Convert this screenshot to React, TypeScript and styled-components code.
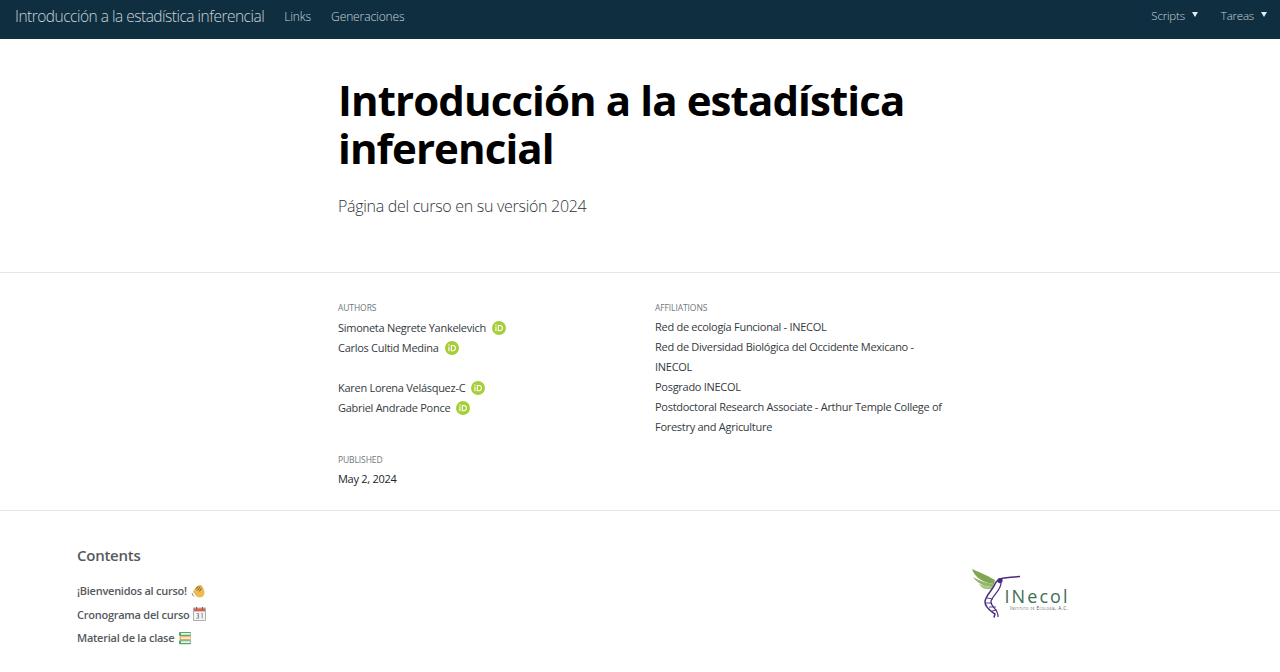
import styled, { createGlobalStyle } from "styled-components";

const GlobalStyle = createGlobalStyle`
  html, body {
    margin: 0;
    padding: 0;
    background: #fff;
    overflow: hidden;
    font-family: "Open Sans", "Noto Sans", sans-serif;
  }
`;

const Page = styled.div`
  width: 1280px;
  height: 672px;
  overflow: hidden;
`;

const Navbar = styled.nav`
  height: 39px;
  box-sizing: border-box;
  background: #0f2f40;
  display: flex;
  align-items: center;
  justify-content: space-between;
  padding: 0 13px 7px 15px;
`;

const NavGroup = styled.div<{ $gap: number }>`
  display: flex;
  align-items: center;
  gap: ${(p) => p.$gap}px;
`;

const Brand = styled.span`
  color: #c9d3d9;
  font-size: 15.5px;
  font-weight: 300;
  letter-spacing: -0.5px;
`;

const NavLink = styled.span`
  color: #c9d3d9;
  font-size: 12px;
  font-weight: 300;
  letter-spacing: -0.1px;
  margin-top: 1px;
`;

const NavDropdown = styled.span`
  color: #c9d3d9;
  font-size: 11.5px;
  font-weight: 300;
  letter-spacing: -0.2px;
  display: flex;
  align-items: center;
  gap: 7px;
  margin-top: -1px;
  &::after {
    content: "";
    border-left: 3px solid transparent;
    border-right: 3px solid transparent;
    border-top: 5px solid #e6ecef;
    margin-top: -2px;
  }
`;

const Hero = styled.header`
  height: 234px;
  box-sizing: border-box;
  padding: 37px 0 0 338px;
  border-bottom: 1px solid #e3e5e7;
`;

const Title = styled.h1`
  margin: 0;
  width: 600px;
  color: #000;
  font-size: 42px;
  line-height: 48px;
  font-weight: 700;
  letter-spacing: -0.9px;
`;

const Subtitle = styled.p`
  margin: 22px 0 0;
  color: #2f353a;
  font-size: 16px;
  font-weight: 300;
  line-height: 24px;
  letter-spacing: -0.29px;
`;

const Meta = styled.section`
  height: 238px;
  box-sizing: border-box;
  padding: 29px 0 0 338px;
  border-bottom: 1px solid #e3e5e7;
`;

const MetaGrid = styled.div`
  display: grid;
  grid-template-columns: 317px 295px;
`;

const MetaLabel = styled.div`
  color: #70777d;
  font-size: 8.5px;
  line-height: 12px;
  letter-spacing: -0.1px;
  margin-bottom: 3px;
`;

const AuthorRow = styled.div<{ $spaced?: boolean }>`
  display: flex;
  align-items: center;
  gap: 6px;
  height: 20px;
  color: #343a40;
  font-size: 11px;
  letter-spacing: -0.28px;
  margin-top: ${(p) => (p.$spaced ? 20 : 0)}px;
`;

const Affiliation = styled.div`
  color: #343a40;
  font-size: 11px;
  line-height: 20px;
  letter-spacing: -0.28px;
`;

const Published = styled.div`
  margin-top: 17px;
`;

const DateText = styled.div`
  color: #212529;
  font-size: 11px;
  line-height: 20px;
  letter-spacing: -0.28px;
`;

const Bottom = styled.section`
  display: flex;
  padding: 34px 0 0 77px;
`;

const Toc = styled.div`
  width: 894px;
`;

const TocTitle = styled.h2`
  margin: 0 0 14px;
  color: #54595e;
  font-size: 15px;
  line-height: 20px;
  font-weight: 600;
  letter-spacing: -0.25px;
`;

const TocItem = styled.div`
  display: flex;
  align-items: center;
  gap: 4px;
  height: 23.5px;
  color: #54595e;
  font-size: 11px;
  font-weight: 600;
  letter-spacing: -0.25px;
`;

const LogoBox = styled.svg`
  margin-top: 23px;
  font-family: "Open Sans", sans-serif;
`;

const OrcidBadge = styled.svg`
  margin-top: 1px;
`;

const OrcidIcon = () => (
  <OrcidBadge width="14" height="14" viewBox="0 0 14 14">
    <circle cx="7" cy="7" r="7" fill="#a6ce39" />
    <rect x="3.4" y="5.6" width="1.1" height="4.6" fill="#fff" />
    <circle cx="3.95" cy="4" r="0.7" fill="#fff" />
    <path
      d="M5.8 3.9h2.2c1.9 0 3 1.4 3 3.1s-1.1 3.2-3 3.2H5.8zM6.9 4.9v4.3h1c1.4 0 2-1 2-2.2 0-1.1-.6-2.1-2-2.1z"
      fill="#fff"
      fillRule="evenodd"
    />
  </OrcidBadge>
);

const ClapIcon = () => (
  <svg width="14" height="14" viewBox="0 0 14 14">
    <path
      d="M2.6 6.4 6 2.2 8 1l2.6.2 1.6 2.8 1.2 3.4c.4 2.4-.6 4.6-2.6 5.6-2.2 1-4.4.4-5.8-1.2L2.4 8.6c-.5-.8-.2-1.6.2-2.2z"
      fill="#eeb94f"
    />
    <path d="M4.6 5.2 7.2 2.2M6.4 6.6l2.8-3.8M8.4 7.4l2-3" stroke="#5f5a48" strokeWidth="1" fill="none" />
    <path d="M1 9.2c.3 1.4 1 2.6 2.2 3.4" stroke="#7f8a94" strokeWidth="1" fill="none" />
  </svg>
);

const CalendarIcon = () => (
  <svg width="13" height="14" viewBox="0 0 13 14">
    <rect x="0.5" y="1" width="12" height="12.5" fill="#f4f4f4" stroke="#9aa0a6" strokeWidth="0.8" />
    <rect x="1" y="1.4" width="11" height="3" fill="#d9634f" />
    <rect x="3" y="0" width="1" height="2.6" fill="#666" />
    <rect x="9" y="0" width="1" height="2.6" fill="#666" />
    <path d="M3.6 6.6h2v2.2h-1.4M5.6 8.8v2.4H3.4M8.2 6.8l1-.4v5" stroke="#6f7880" strokeWidth="0.8" fill="none" />
  </svg>
);

const BooksIcon = () => (
  <svg width="14" height="14" viewBox="0 0 14 14">
    <rect x="1" y="1" width="12" height="4" rx="0.8" fill="#58a66c" />
    <rect x="1.5" y="5.2" width="11.5" height="3.8" rx="0.8" fill="#e3a94e" />
    <rect x="1" y="9.2" width="12" height="4" rx="0.8" fill="#58a66c" />
    <rect x="3" y="2" width="9.5" height="1.8" fill="#f2f0e6" />
    <rect x="3" y="6.2" width="9.5" height="1.8" fill="#f2f0e6" />
    <rect x="3" y="10.2" width="9.5" height="1.8" fill="#f2f0e6" />
  </svg>
);

const InecolLogo = () => (
  <LogoBox width="100" height="52" viewBox="0 0 100 52">
    <path d="M1 1C5 3 14 6 24 12l-1 4C13 15 4 10 1 1z" fill="#7fa650" />
    <path d="M2 9c5 3 12 6 21 7l-1 3C13 19 6 15 2 9z" fill="#93b768" />
    <path d="M8 16c5 2 10 3 14 3l-1 2c-5 1-10 0-13-5z" fill="#a7c582" />
    <path
      d="M49 8.6C42 8.8 37 9.4 33 10c-5 .6-8 3-9.5 7-2 5-9.5 11-9.5 17 0 6 6 9 10 12l-1 3.5"
      stroke="#4a2a82"
      strokeWidth="1.5"
      fill="none"
    />
    <circle cx="29" cy="12.6" r="2.6" fill="#4a2a82" />
    <path d="M30 15c0 7-8 12-10 18-1 6 8 8 7 16" stroke="#4a2a82" strokeWidth="1.2" fill="none" />
    <path d="M16 30l6 1M15 35l6 0M18 39l7 0M21 43l5-1" stroke="#4a2a82" strokeWidth="0.9" />
    <text x="33.5" y="35" fontSize="18" fill="#3f6f52" textLength="63" lengthAdjust="spacing">
      INecol
    </text>
    <text x="39" y="41.5" fontSize="4.8" fill="#555" textLength="58" lengthAdjust="spacing" style={{ fontVariant: "small-caps" }}>
      Instituto de Ecología, A.C.
    </text>
  </LogoBox>
);

export default function App() {
  return (
    <Page>
      <GlobalStyle />
      <Navbar>
        <NavGroup $gap={20}>
          <Brand>Introducción a la estadística inferencial</Brand>
          <NavLink>Links</NavLink>
          <NavLink>Generaciones</NavLink>
        </NavGroup>
        <NavGroup $gap={23}>
          <NavDropdown>Scripts</NavDropdown>
          <NavDropdown>Tareas</NavDropdown>
        </NavGroup>
      </Navbar>

      <Hero>
        <Title>Introducción a la estadística inferencial</Title>
        <Subtitle>Página del curso en su versión 2024</Subtitle>
      </Hero>

      <Meta>
        <MetaGrid>
          <div>
            <MetaLabel>AUTHORS</MetaLabel>
            <AuthorRow>
              Simoneta Negrete Yankelevich <OrcidIcon />
            </AuthorRow>
            <AuthorRow>
              Carlos Cultid Medina <OrcidIcon />
            </AuthorRow>
            <AuthorRow $spaced>
              Karen Lorena Velásquez-C <OrcidIcon />
            </AuthorRow>
            <AuthorRow>
              Gabriel Andrade Ponce <OrcidIcon />
            </AuthorRow>
          </div>
          <div>
            <MetaLabel>AFFILIATIONS</MetaLabel>
            <Affiliation>Red de ecología Funcional - INECOL</Affiliation>
            <Affiliation>Red de Diversidad Biológica del Occidente Mexicano - INECOL</Affiliation>
            <Affiliation>Posgrado INECOL</Affiliation>
            <Affiliation>Postdoctoral Research Associate - Arthur Temple College of Forestry and Agriculture</Affiliation>
          </div>
        </MetaGrid>
        <Published>
          <MetaLabel>PUBLISHED</MetaLabel>
          <DateText>May 2, 2024</DateText>
        </Published>
      </Meta>

      <Bottom>
        <Toc>
          <TocTitle>Contents</TocTitle>
          <TocItem>
            ¡Bienvenidos al curso! <ClapIcon />
          </TocItem>
          <TocItem>
            Cronograma del curso <CalendarIcon />
          </TocItem>
          <TocItem>
            Material de la clase <BooksIcon />
          </TocItem>
        </Toc>
        <InecolLogo />
      </Bottom>
    </Page>
  );
}
